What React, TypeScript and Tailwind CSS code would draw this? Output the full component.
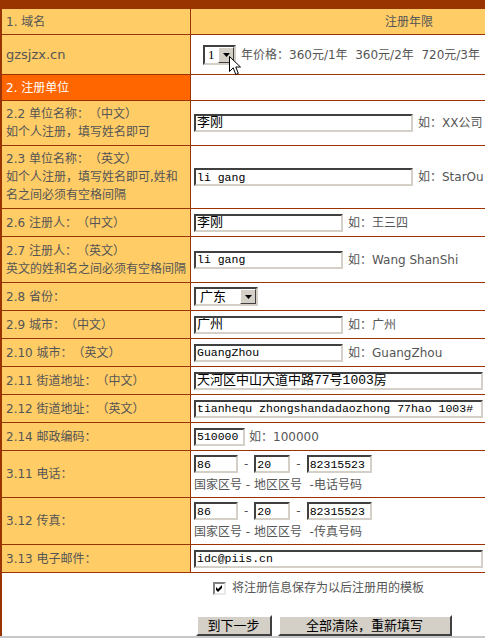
import type { ReactNode } from "react";

const inputBox =
  "border-2 border-t-[#404040] border-l-[#404040] border-r-[#d4d0c8] border-b-[#d4d0c8] bg-white px-[1px] py-0 text-[#000] outline-none font-['Liberation_Mono','Noto_Sans_CJK_SC',monospace]";

function Field({ w, value, cjk }: { w: string; value: string; cjk?: boolean }) {
  return (
    <input
      readOnly
      value={value}
      className={`${w} h-[18px] ${inputBox} ${cjk ? "text-[13px]" : "text-[11.5px]"}`}
    />
  );
}

function Hint({ children, gap = "ml-[5px]" }: { children: ReactNode; gap?: string }) {
  return <span className={`${gap} whitespace-nowrap text-[#555]`}>{children}</span>;
}

function DropBox({ w, h, label, pad }: { w: string; h: string; label: string; pad: string }) {
  return (
    <div className={`flex ${w} ${h} items-stretch border-2 border-t-[#404040] border-l-[#404040] border-r-[#d4d0c8] border-b-[#d4d0c8] bg-white`}>
      <span className={`flex flex-1 items-center ${pad} text-[13px] text-black font-['Liberation_Serif','Noto_Sans_CJK_SC',serif]`}>
        {label}
      </span>
      <span className="flex w-[16px] items-center justify-center border border-t-white border-l-white border-r-[#404040] border-b-[#404040] bg-[#d4d0c8]">
        <svg width="7" height="4" viewBox="0 0 7 4">
          <path d="M0 0h7L3.5 4z" fill="#000" />
        </svg>
      </span>
    </div>
  );
}

function Row({
  h,
  label,
  children,
  orange,
  center,
}: {
  h: string;
  label: ReactNode;
  children?: ReactNode;
  orange?: boolean;
  center?: boolean;
}) {
  return (
    <div className={`flex ${h} border-b border-[#993300]`}>
      <div
        className={`flex w-[189px] shrink-0 items-center border-r border-[#993300] pl-[4px] leading-[18px] ${
          orange ? "bg-[#ff6600] text-white" : "bg-[#ffcc66] text-[#555]"
        }`}
      >
        <div>{label}</div>
      </div>
      <div className={`flex flex-1 items-center pl-[3px] ${center ? "justify-center bg-[#ffcc66] text-[#555]" : "bg-white"}`}>
        {children}
      </div>
    </div>
  );
}

function PhoneRow({ h, label, last }: { h: string; label: string; last: string }) {
  return (
    <Row h={h} label={label}>
      <div className="flex flex-col gap-[4px]">
        <div className="flex items-center text-[#555]">
          <Field w="w-[44px]" value="86" />
          <span className="mx-[6px]">-</span>
          <Field w="w-[36px]" value="20" />
          <span className="mx-[6px]">-</span>
          <Field w="w-[65px]" value="82315523" />
        </div>
        <div className="whitespace-nowrap leading-[16px] text-[#555]">
          国家区号 - 地区区号 &nbsp;-{last}
        </div>
      </div>
    </Row>
  );
}

export default function App() {
  return (
    <div className="h-[638px] w-[485px] overflow-hidden bg-white text-[12px] [text-spacing-trim:space-all] font-['DejaVu_Sans','Noto_Sans_CJK_SC',sans-serif]">
      <div className="h-[9px] w-[627px] bg-[#993300]" />
      <div className="w-[627px] border-l-2 border-[#993300]">
        <Row h="h-[26px]" label="1. 域名" center>
          <span className="-ml-[3px]">注册年限</span>
        </Row>

        <Row h="h-[40px]" label={<span className="text-[13px]">gzsjzx.cn</span>}>
          <div className="relative ml-[9px]">
            <DropBox w="w-[33px]" h="h-[20px]" label="1" pad="pl-[3px]" />
            {/* mouse pointer resting on the year selector */}
            <svg className="absolute left-[26px] top-[11px]" width="13" height="20" viewBox="0 0 13 20">
              <path
                d="M0.5 0.5 L0.5 15.5 L4.2 11.8 L6.8 18.5 L9.3 17.4 L6.8 11 L11.5 11 Z"
                fill="#fff"
                stroke="#000"
                strokeWidth="1"
                strokeLinejoin="miter"
              />
            </svg>
          </div>
          <span className="ml-[5px] whitespace-nowrap text-[#555]">
            年价格：360元/1年 &nbsp;360元/2年 &nbsp;720元/3年
          </span>
        </Row>

        <Row h="h-[26px]" label="2. 注册单位" orange />

        <Row
          h="h-[45px]"
          label={
            <>
              2.2 单位名称：（中文）
              <br />
              如个人注册，填写姓名即可
            </>
          }
        >
          <Field w="w-[219px]" value="李刚" cjk />
          <Hint>如：XX公司</Hint>
        </Row>

        <Row
          h="h-[63px]"
          label={
            <>
              2.3 单位名称：（英文）
              <br />
              如个人注册，填写姓名即可,姓和
              <br />
              名之间必须有空格间隔
            </>
          }
        >
          <Field w="w-[219px]" value="li gang" />
          <Hint>如：StarOu</Hint>
        </Row>

        <Row h="h-[28px]" label="2.6 注册人：（中文）">
          <Field w="w-[149px]" value="李刚" cjk />
          <Hint>如：王三四</Hint>
        </Row>

        <Row
          h="h-[46px]"
          label={
            <>
              2.7 注册人：（英文）
              <br />
              英文的姓和名之间必须有空格间隔
            </>
          }
        >
          <Field w="w-[149px]" value="li gang" />
          <Hint>如：Wang ShanShi</Hint>
        </Row>

        <Row h="h-[28px]" label="2.8 省份：">
          <DropBox w="w-[64px]" h="h-[19px]" label="广东" pad="pl-[4px]" />
        </Row>

        <Row h="h-[28px]" label="2.9 城市：（中文）">
          <Field w="w-[149px]" value="广州" cjk />
          <Hint>如：广州</Hint>
        </Row>

        <Row h="h-[28px]" label="2.10 城市：（英文）">
          <Field w="w-[149px]" value="GuangZhou" />
          <Hint>如：GuangZhou</Hint>
        </Row>

        <Row h="h-[28px]" label="2.11 街道地址：（中文）">
          <Field w="w-[289px]" value="天河区中山大道中路77号1003房" cjk />
        </Row>

        <Row h="h-[28px]" label="2.12 街道地址：（英文）">
          <Field w="w-[289px]" value="tianhequ zhongshandadaozhong 77hao 1003#" />
        </Row>

        <Row h="h-[28px]" label="2.14 邮政编码：">
          <Field w="w-[51px]" value="510000" />
          <Hint gap="ml-[4px]">如：100000</Hint>
        </Row>

        <PhoneRow h="h-[47px]" label="3.11 电话：" last="电话号码" />
        <PhoneRow h="h-[47px]" label="3.12 传真：" last="传真号码" />

        <Row h="h-[28px]" label="3.13 电子邮件：">
          <Field w="w-[289px]" value="idc@piis.cn" />
        </Row>

        <div className="flex h-[63px] flex-col items-center pl-[8px] pt-[8px]">
          <label className="flex h-[14px] items-center text-[#555]">
            <span className="flex h-[13px] w-[13px] items-center justify-center border-2 border-t-[#808080] border-l-[#808080] border-r-[#e8e8e8] border-b-[#e8e8e8] bg-white">
              <svg width="7" height="7" viewBox="0 0 7 7">
                <path d="M0 2 L2 4 L6 0 L6 3 L2 7 L0 5 Z" fill="#000" />
              </svg>
            </span>
            <span className="ml-[6px]">将注册信息保存为以后注册用的模板</span>
          </label>
          <div className="mt-[20px] flex gap-[6px] pl-[10px] text-[13px] text-black">
            <button className="h-[21px] w-[76px] border-2 border-t-white border-l-white border-r-[#404040] border-b-[#404040] bg-[#d4d0c8] leading-none">
              到下一步
            </button>
            <button className="h-[21px] w-[174px] border-2 border-t-white border-l-white border-r-[#404040] border-b-[#404040] bg-[#d4d0c8] leading-none">
              全部清除，重新填写
            </button>
          </div>
        </div>
      </div>
      <div className="h-[2px] w-[627px] bg-[#c8c8c8]" />
    </div>
  );
}
